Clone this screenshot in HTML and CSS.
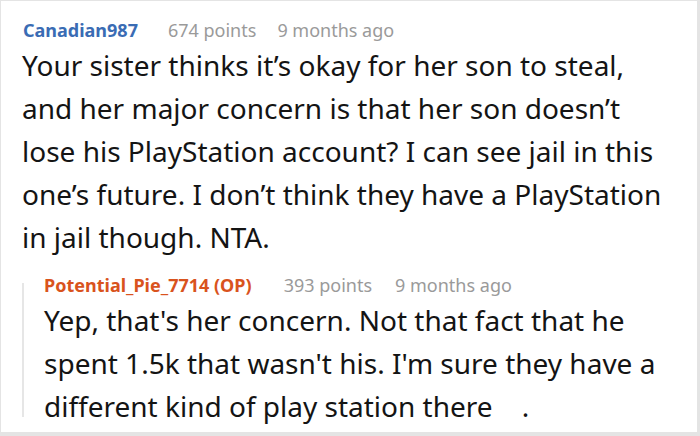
FILE: index.html
```html
<!DOCTYPE html>
<html>
<head>
<meta charset="utf-8">
<link rel="stylesheet" href="styles.css">
</head>
<body>
<div class="frame">
  <div class="meta">
    <span class="author">Canadian987</span>
    <span class="points">674 points</span>
    <span class="time">9 months ago</span>
  </div>
  <p class="text">Your sister thinks it’s okay for her son to steal, and her major concern is that her son doesn’t lose his PlayStation account? I can see jail in this one’s future. I don’t think they have a PlayStation in jail though. NTA.</p>
  <div class="reply">
    <div class="meta">
      <span class="author op">Potential_Pie_7714 (OP)</span>
      <span class="points">393 points</span>
      <span class="time">9 months ago</span>
    </div>
    <p class="text">Yep, that's her concern. Not that fact that he spent 1.5k that wasn't his. I'm sure they have a different kind of play station there&nbsp;&nbsp;&nbsp; .</p>
  </div>
</div>
</body>
</html>
```
FILE: styles.css
```css
html, body {
  margin: 0;
  padding: 0;
  background: #fff;
}
.frame {
  width: 700px;
  height: 436px;
  box-sizing: border-box;
  border-style: solid;
  border-color: #e4e4e4;
  border-width: 1px 3px 4px 1px;
  padding: 17px 27px 0 21px;
  overflow: hidden;
  font-family: "Noto Sans", sans-serif;
}
.meta {
  display: flex;
  align-items: baseline;
  font-size: 18px;
  line-height: 24px;
  margin-left: 1px;
}
.author {
  font-weight: 700;
  color: #3a6cb4;
  margin-right: 30px;
}
.points {
  color: #9a9a9a;
  margin-right: 21px;
}
.time {
  color: #9a9a9a;
}
.text {
  margin: 2px 0 0;
  font-size: 28px;
  line-height: 43px;
  color: #141414;
}
.reply {
  position: relative;
  margin-top: 14px;
  padding-left: 22px;
}
.reply::before {
  content: "";
  position: absolute;
  left: 0;
  top: 10px;
  bottom: 11px;
  width: 2px;
  background: #e6e6e6;
}
.reply .meta {
  margin-left: 0;
}
.op {
  color: #d9531d;
  margin-right: 32px;
}
.reply .points {
  margin-right: 23px;
}
```
